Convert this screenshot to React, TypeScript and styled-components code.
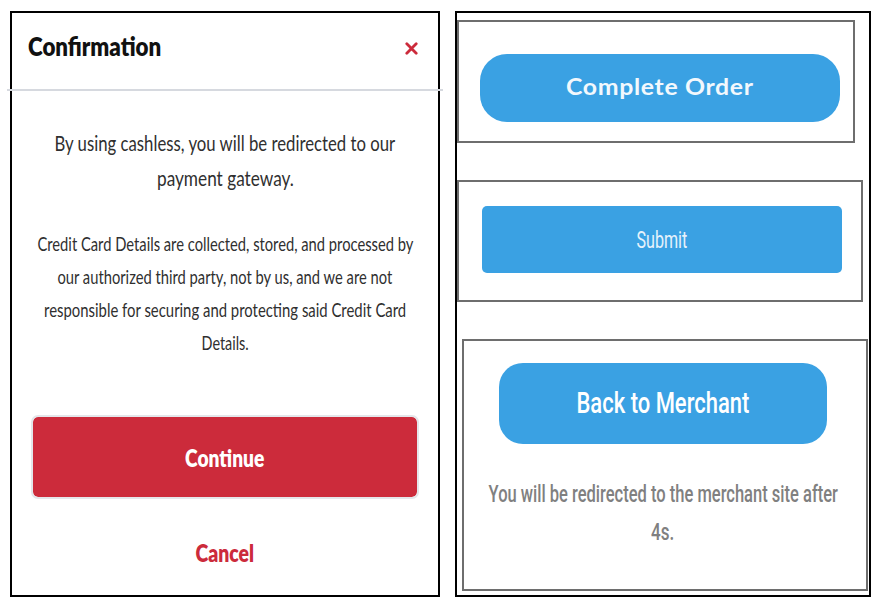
import React, { useLayoutEffect, useRef, useState } from "react";
import styled, { createGlobalStyle } from "styled-components";

const Global = createGlobalStyle`
  html, body { margin: 0; padding: 0; background: #ffffff; }
  body { width: 882px; height: 603px; overflow: hidden; }
  button { cursor: pointer; }
`;

const leftFont = `Lato, "Open Sans", "Liberation Sans", sans-serif`;
const rightFont = `Roboto, "Liberation Sans", sans-serif`;

/* A line of text squeezed horizontally to the condensed width seen in the screenshot. */
const FitBox = styled.span<{ $origin: string }>`
  display: inline-block;
  white-space: nowrap;
  transform-origin: ${(p) => p.$origin};
`;

function Fit({ w, origin = "center", children }: { w: number; origin?: string; children: React.ReactNode }) {
  const ref = useRef<HTMLSpanElement>(null);
  const [k, setK] = useState(1);
  useLayoutEffect(() => {
    const measure = () => {
      if (ref.current && ref.current.offsetWidth) setK(w / ref.current.offsetWidth);
    };
    measure();
    if (document.fonts) document.fonts.ready.then(measure);
  }, [w]);
  return (
    <FitBox ref={ref} $origin={origin} style={{ transform: `scaleX(${k})` }}>
      {children}
    </FitBox>
  );
}

const Page = styled.div`
  display: flex;
  align-items: flex-start;
  gap: 15px;
  padding: 11px 0 0 10px;
`;

/* ---------- left: confirmation modal ---------- */

const Modal = styled.section`
  box-sizing: border-box;
  width: 430px;
  height: 586px;
  border: 2px solid #000;
  display: flex;
  flex-direction: column;
  font-family: ${leftFont};
`;

const Header = styled.header`
  box-sizing: border-box;
  display: flex;
  align-items: flex-start;
  justify-content: space-between;
  height: 78px;
  margin: 0 -5px;
  padding: 17px 25px 0 21px;
  border-bottom: 2px solid #d6d9df;
`;

const Title = styled.h1`
  margin: 0;
  font-size: 27px;
  line-height: 32px;
  font-weight: 800;
  color: #111;
`;

const Close = styled.button`
  border: none;
  background: none;
  padding: 0;
  margin-top: 12px;
  width: 13px;
  height: 13px;
  display: flex;
`;

const Body = styled.div`
  display: flex;
  flex-direction: column;
  align-items: center;
  padding-top: 34px;
`;

const Lead = styled.p`
  margin: 0;
  display: flex;
  flex-direction: column;
  align-items: center;
  font-size: 22px;
  line-height: 35px;
  color: #2f2f2f;
`;

const Fine = styled.p`
  margin: 32px 0 0;
  display: flex;
  flex-direction: column;
  align-items: center;
  font-size: 19px;
  line-height: 33px;
  color: #2f2f2f;
`;

const Primary = styled.button`
  box-sizing: border-box;
  margin-top: 56px;
  width: 388px;
  height: 84px;
  border-radius: 7px;
  border: 2px solid #e4e6ea;
  background: #cc2b3b;
  background-clip: padding-box;
  color: #fff;
  font-family: ${leftFont};
  font-size: 25px;
  font-weight: 800;
  padding: 0;
`;

const TextButton = styled.button`
  margin-top: 38px;
  border: none;
  background: none;
  color: #cc2b3b;
  font-family: ${leftFont};
  font-size: 25px;
  line-height: 30px;
  font-weight: 800;
  padding: 0;
`;

/* ---------- right: button screenshots ---------- */

const Shots = styled.section`
  box-sizing: border-box;
  width: 416px;
  height: 586px;
  border: 2px solid #000;
  display: flex;
  flex-direction: column;
  align-items: flex-start;
`;

const Shot = styled.div<{ $w: number; $h: number; $top: number; $left?: number; $pad: string; $center?: boolean }>`
  box-sizing: border-box;
  width: ${(p) => p.$w}px;
  height: ${(p) => p.$h}px;
  margin-top: ${(p) => p.$top}px;
  margin-left: ${(p) => p.$left ?? 0}px;
  border: 2px solid #6e6e6e;
  padding: ${(p) => p.$pad};
  display: flex;
  flex-direction: column;
  align-items: ${(p) => (p.$center ? "center" : "flex-start")};
`;

const BlueButton = styled.button<{ $w: number; $h: number; $r: number; $lift?: number }>`
  box-sizing: border-box;
  flex-shrink: 0;
  width: ${(p) => p.$w}px;
  height: ${(p) => p.$h}px;
  border-radius: ${(p) => p.$r}px;
  border: none;
  background: #3aa1e3;
  color: #fff;
  padding: 0 0 ${(p) => p.$lift ?? 0}px;
`;

const OrderLabel = styled.span`
  font-family: Lato, "Open Sans", sans-serif;
  font-weight: 700;
  font-size: 23px;
  letter-spacing: 0.6px;
  color: #f2f8fd;
`;

const SubmitLabel = styled.span`
  font-family: ${rightFont};
  font-weight: 400;
  font-size: 24px;
  color: #e6f2fb;
`;

const MerchantLabel = styled.span`
  font-family: ${rightFont};
  font-weight: 500;
  font-size: 30px;
  color: #fff;
`;

const Redirect = styled.p`
  margin: 32px 0 0;
  display: flex;
  flex-direction: column;
  align-items: center;
  font-family: ${rightFont};
  font-weight: 500;
  font-size: 23px;
  line-height: 38px;
  color: #808080;
`;

const leadLines: [string, number][] = [
  ["By using cashless, you will be redirected to our", 341],
  ["payment gateway.", 137],
];

const fineLines: [string, number][] = [
  ["Credit Card Details are collected, stored, and processed by", 376],
  ["our authorized third party, not by us, and we are not", 335],
  ["responsible for securing and protecting said Credit Card", 362],
  ["Details.", 47],
];

export default function App() {
  return (
    <>
      <Global />
      <Page>
        <Modal>
          <Header>
            <Title>
              <Fit w={133} origin="left">Confirmation</Fit>
            </Title>
            <Close aria-label="Close">
              <svg width="13" height="13" viewBox="0 0 13 13">
                <path d="M1.8 1.8 L11.2 11.2 M11.2 1.8 L1.8 11.2" stroke="#cc2b3b" strokeWidth="2.8" strokeLinecap="round" />
              </svg>
            </Close>
          </Header>
          <Body>
            <Lead>
              {leadLines.map(([t, w]) => (
                <Fit key={t} w={w}>{t}</Fit>
              ))}
            </Lead>
            <Fine>
              {fineLines.map(([t, w]) => (
                <Fit key={t} w={w}>{t}</Fit>
              ))}
            </Fine>
            <Primary>
              <Fit w={79}>Continue</Fit>
            </Primary>
            <TextButton>
              <Fit w={59}>Cancel</Fit>
            </TextButton>
          </Body>
        </Modal>
        <Shots>
          <Shot $w={398} $h={123} $top={7} $pad="32px 0 0 21px">
            <BlueButton $w={360} $h={68} $r={27} $lift={4}>
              <OrderLabel>
                <Fit w={188}>Complete Order</Fit>
              </OrderLabel>
            </BlueButton>
          </Shot>
          <Shot $w={406} $h={122} $top={37} $pad="24px 0 0 23px">
            <BlueButton $w={360} $h={67} $r={5}>
              <SubmitLabel>
                <Fit w={51}>Submit</Fit>
              </SubmitLabel>
            </BlueButton>
          </Shot>
          <Shot $w={406} $h={252} $top={37} $left={5} $pad="22px 4px 0 0" $center>
            <BlueButton $w={328} $h={81} $r={24} $lift={3}>
              <MerchantLabel>
                <Fit w={173}>Back to Merchant</Fit>
              </MerchantLabel>
            </BlueButton>
            <Redirect>
              <Fit w={349}>You will be redirected to the merchant site after</Fit>
              <Fit w={23}>4s.</Fit>
            </Redirect>
          </Shot>
        </Shots>
      </Page>
    </>
  );
}
